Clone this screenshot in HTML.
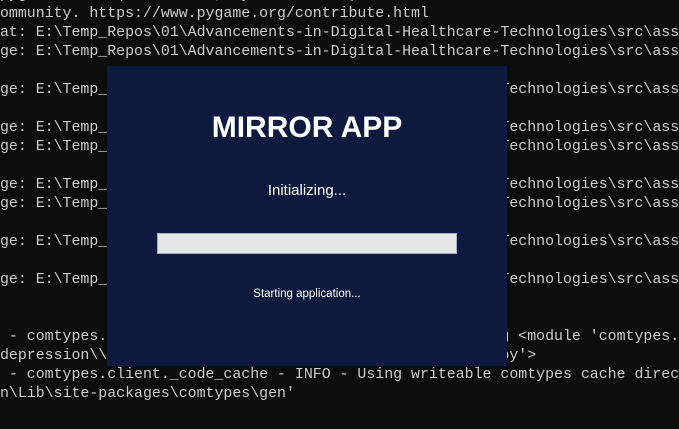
<!DOCTYPE html>
<html><head><meta charset="utf-8"><style>
html,body{margin:0;padding:0;}
body{width:679px;height:429px;overflow:hidden;background:#0c0c0c;position:relative;}
.term{position:absolute;left:0;top:-14px;font-family:"Liberation Mono",monospace;font-size:14.9px;line-height:19px;color:#cccccc;white-space:pre;}
.dlg{position:absolute;left:107px;top:66px;width:400px;height:300px;background:#0c1a3f;font-family:"Liberation Sans",sans-serif;color:#fff;}
.t{position:absolute;left:0;width:400px;text-align:center;}
.bar{position:absolute;left:50px;top:167px;width:298px;height:19px;background:#e6e6e6;border:1px solid #a7adc0;}
</style></head><body>
<div class="term">pygame 2.6.1 (SDL 2.28.4, Python 3.12.0)
ommunity. https://www.pygame.org/contribute.html
at: E:\Temp_Repos\01\Advancements-in-Digital-Healthcare-Technologies\src\ass
ge: E:\Temp_Repos\01\Advancements-in-Digital-Healthcare-Technologies\src\ass

ge: E:\Temp_Repos\01\Advancements-in-Digital-Healthcare-Technologies\src\ass

ge: E:\Temp_Repos\01\Advancements-in-Digital-Healthcare-Technologies\src\ass
ge: E:\Temp_Repos\01\Advancements-in-Digital-Healthcare-Technologies\src\ass

ge: E:\Temp_Repos\01\Advancements-in-Digital-Healthcare-Technologies\src\ass
ge: E:\Temp_Repos\01\Advancements-in-Digital-Healthcare-Technologies\src\ass

ge: E:\Temp_Repos\01\Advancements-in-Digital-Healthcare-Technologies\src\ass

ge: E:\Temp_Repos\01\Advancements-in-Digital-Healthcare-Technologies\src\ass


 - comtypes.client._code_cache - INFO - Imported existing &lt;module 'comtypes.
depression\\Lib\\site-packages\\comtypes\\gen\\__init__.py'&gt;
 - comtypes.client._code_cache - INFO - Using writeable comtypes cache direc
n\Lib\site-packages\comtypes\gen'</div>
<div class="dlg">
<div class="t" style="top:45px;font-size:30px;font-weight:bold;">MIRROR APP</div>
<div class="t" style="top:116px;font-size:15px;">Initializing...</div>
<div class="bar"></div>
<div class="t" style="top:222px;font-size:11.5px;">Starting application...</div>
</div>
</body></html>
